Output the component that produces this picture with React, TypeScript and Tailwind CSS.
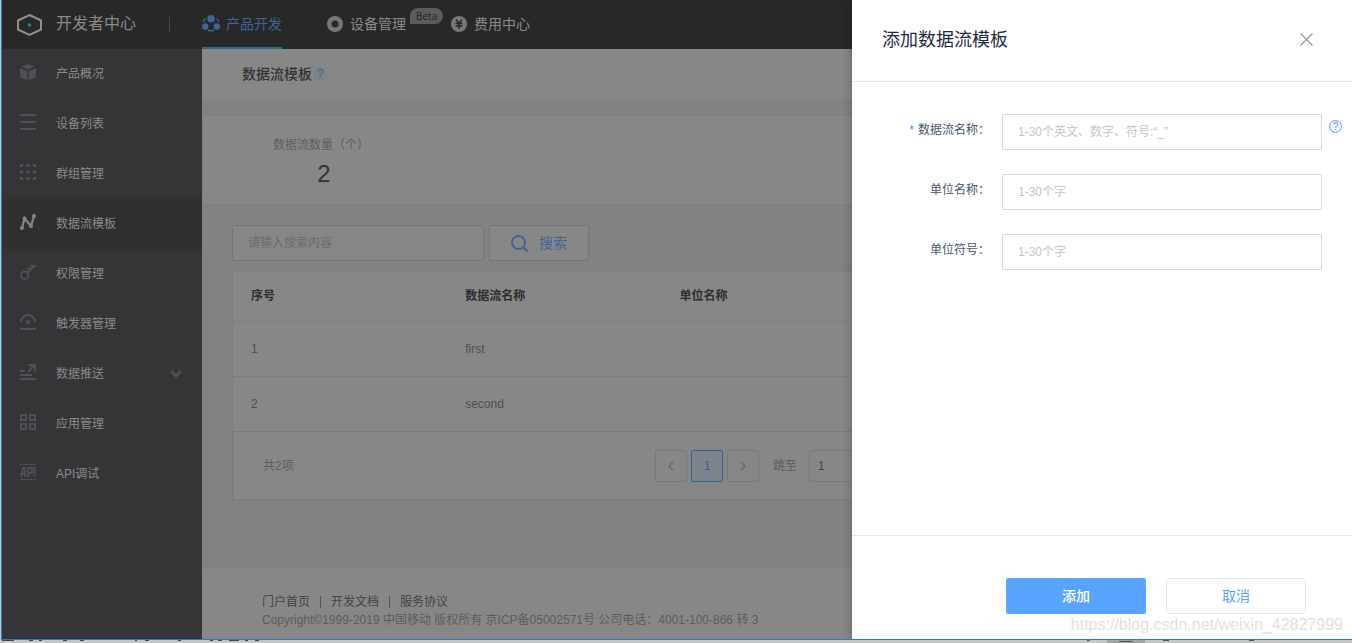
import type { ReactNode } from "react";

type MenuItem = {
  label: string;
  icon: ReactNode;
  active?: boolean;
  expandable?: boolean;
};

const menu: MenuItem[] = [
  {
    label: "产品概况",
    icon: (
      <g fill="currentColor">
        <path d="M8 0l6.600 2.700L8 5.400 1.400 2.700z" />
        <path d="M0 4.200l7.300 2.600V16L1.500 14Q0 13.500 0 12z" />
        <path d="M16 4.200L8.700 6.800V16l5.800-2Q16 13.500 16 12z" />
      </g>
    ),
  },
  {
    label: "设备列表",
    icon: <path d="M0 1h16M0 8h16M0 15h16" stroke="currentColor" strokeWidth="2" />,
  },
  {
    label: "群组管理",
    icon: (
      <path
        d="M0 1.500h16M0 8h16M0 14.500h16"
        stroke="currentColor"
        strokeWidth="3"
        strokeDasharray="3 3.500"
      />
    ),
  },
  {
    label: "数据流模板",
    active: true,
    icon: (
      <g fill="currentColor">
        <path d="M2 14L4.500 4.500L11 12L14 2" fill="none" stroke="currentColor" strokeWidth="2.200" />
        <circle cx="2" cy="14" r="2" />
        <circle cx="4.500" cy="4.500" r="2" />
        <circle cx="11" cy="12" r="2" />
        <circle cx="14" cy="2" r="2" />
      </g>
    ),
  },
  {
    label: "权限管理",
    icon: (
      <g fill="none" stroke="currentColor" strokeWidth="1.800">
        <circle cx="4.700" cy="11.300" r="3.700" />
        <path d="M7.200 8.800L14 2h2M7.500 3.500L10 6M10.700 0.800L13 3" />
      </g>
    ),
  },
  {
    label: "触发器管理",
    icon: (
      <g fill="none" stroke="currentColor" strokeWidth="2">
        <path d="M1 8a7 7 0 0 1 14 0M0 15h16" />
        <circle cx="8" cy="8" r="2" fill="currentColor" stroke="none" />
      </g>
    ),
  },
  {
    label: "数据推送",
    expandable: true,
    icon: (
      <path
        d="M0 7h5M0 11h12M0 15h16M8 8l6.500-7M8 1h7v7"
        fill="none"
        stroke="currentColor"
        strokeWidth="2"
      />
    ),
  },
  {
    label: "应用管理",
    icon: (
      <path
        d="M1 1h5v5H1zM10 1h5v5h-5zM1 10h5v5H1zM10 10h5v5h-5z"
        fill="none"
        stroke="currentColor"
        strokeWidth="2"
      />
    ),
  },
  {
    label: "API调试",
    icon: (
      <g fill="none" stroke="currentColor">
        <path d="M0 0.500h2M3 0.500h13M0 15.500h13M14 15.500h2" />
        <path d="M1 13L3 4h2v9M2 10h3M8 13V4h4v5H8M14.500 3v10" strokeWidth="1.800" />
      </g>
    ),
  },
];

const rows = [
  { id: 1, name: "first", unit: "" },
  { id: 2, name: "second", unit: "" },
];

const fields = [
  { id: "stream-name", label: "数据流名称：", placeholder: "1-30个英文、数字、符号:“_”", required: true },
  { id: "unit-name", label: "单位名称：", placeholder: "1-30个字", required: false },
  { id: "unit-symbol", label: "单位符号：", placeholder: "1-30个字", required: false },
];

const footerLinks = ["门户首页", "开发文档", "服务协议"];

function TopBar() {
  return (
    <header className="flex h-[49px] items-center bg-[#282828] pl-[15px] text-[#8a8a8a]">
      <svg width="25" height="24" viewBox="0 0 25 24" fill="none" className="mr-3.5">
        <path d="M12.500 2L24 7.500v9L12.500 22 1 16.500v-9z" stroke="#8f8f8f" strokeWidth="2" />
        <circle cx="12.500" cy="12" r="1.800" fill="#2b7f9c" />
      </svg>
      <span className="pb-0.5 text-base">开发者中心</span>
      <span className="ml-[33px] h-4 w-px bg-[#4a4a4a]" />
      <nav className="ml-8 flex h-full gap-[45px] text-sm">
        <a
          href="#product"
          className="flex items-center gap-1.5 border-b-2 border-[#2a6a86] text-[#3f6496]"
        >
          <svg width="18" height="17" viewBox="0 0 18 17" fill="currentColor">
            <circle cx="9" cy="3.800" r="3.800" />
            <circle cx="3.200" cy="11.500" r="3.200" />
            <circle cx="14.800" cy="11.500" r="3.200" />
            <path
              d="M3.500 3.500Q1.500 5 1.500 7M14.500 3.500Q16.500 5 16.500 7M6 15q3 1.500 6 0"
              fill="none"
              stroke="currentColor"
              strokeWidth="1.500"
            />
          </svg>
          产品开发
        </a>
        <a href="#device" className="relative flex items-center gap-[7px] pb-0.5">
          <svg width="16" height="16" viewBox="0 0 16 16" fill="none">
            <circle cx="8" cy="8" r="5.800" stroke="#777777" strokeWidth="4.400" />
          </svg>
          设备管理
          <span className="absolute top-2 left-full ml-1 h-4 rounded-full rounded-bl-none bg-[#5c5c5c] px-1.5 font-['Open_Sans'] text-[10px] leading-4 text-[#222222]">
            Beta
          </span>
        </a>
        <a href="#billing" className="flex items-center gap-[7px] pb-0.5">
          <svg width="16" height="16" viewBox="0 0 16 16" fill="none">
            <circle cx="8" cy="8" r="8" fill="#777777" />
            <path
              d="M5 3.500l3 4 3-4M4.500 7.500h7M4.500 10h7M8 7.500V13"
              stroke="#282828"
              strokeWidth="1.500"
            />
          </svg>
          费用中心
        </a>
      </nav>
    </header>
  );
}

function SideMenu() {
  return (
    <nav className="w-[200px] shrink-0 bg-[#353537] text-xs text-[#8a8a8a]">
      {menu.map((item) => (
        <a
          key={item.label}
          href="#menu"
          className={
            item.active
              ? "flex h-[50px] items-center bg-[#2f2f2f] pl-[18px]"
              : "flex h-[50px] items-center pl-[18px]"
          }
        >
          <svg
            width="16"
            height="16"
            viewBox="0 0 16 16"
            className={item.active ? "mb-1 text-[#858585]" : "mb-1 text-[#4f5056]"}
          >
            {item.icon}
          </svg>
          <span className="ml-5">{item.label}</span>
          {item.expandable && (
            <svg width="12" height="8" viewBox="0 0 12 8" fill="none" className="mr-5 ml-auto">
              <path d="M1 1l5 5 5-5" stroke="#505156" strokeWidth="2.500" />
            </svg>
          )}
        </a>
      ))}
    </nav>
  );
}

function Pager() {
  return (
    <div className="flex h-[69px] items-center justify-between border border-[#7a7a7a] pl-[30px] text-xs text-[#5c5c5c]">
      <span>共2项</span>
      <div className="flex w-[649px] items-center gap-1">
        <button
          aria-label="上一页"
          className="flex size-8 items-center justify-center rounded-xs border border-[#7a7a7a]"
        >
          <svg width="6" height="10" viewBox="0 0 6 10" fill="none" stroke="#6b6b6b" strokeWidth="1.500">
            <path d="M5 1L1 5l4 4" />
          </svg>
        </button>
        <button className="size-8 rounded-xs border border-[#3a6090] bg-[#7e838c] text-[#3f5a91]">
          1
        </button>
        <button
          aria-label="下一页"
          className="flex size-8 items-center justify-center rounded-xs border border-[#7a7a7a]"
        >
          <svg width="6" height="10" viewBox="0 0 6 10" fill="none" stroke="#6b6b6b" strokeWidth="1.500">
            <path d="M1 1l4 4-4 4" />
          </svg>
        </button>
        <label htmlFor="jump" className="mr-2 ml-2.5">
          跳至
        </label>
        <input
          id="jump"
          defaultValue="1"
          className="h-8 w-16 rounded-xs border border-[#7a7a7a] px-2 text-[#444444]"
        />
      </div>
    </div>
  );
}

function Content() {
  return (
    <main className="flex min-w-0 flex-1 flex-col bg-[#828282] text-xs text-[#4f4f4f]">
      <div className="flex h-[50px] shrink-0 items-center bg-[#878787] pl-10">
        <h1 className="text-sm font-medium text-[#333333]">数据流模板</h1>
        <span className="ml-px flex size-3.5 items-center justify-center rounded-full bg-[#7b838e] text-xs leading-none text-[#41638f]">
          ?
        </span>
      </div>

      <section className="mt-4 flex h-[90px] shrink-0 border border-[#7f7f7f] bg-[#878787] pt-5 pl-[70px]">
        <div className="text-center">
          <p className="leading-[18px] text-[#5f5f5f]">数据流数量（个）</p>
          <p className="mt-1 pl-1.5 text-2xl text-[#333333]">2</p>
        </div>
      </section>

      <div className="mt-5 flex gap-[5px] pl-[30px]">
        <input
          aria-label="搜索内容"
          placeholder="请输入搜索内容"
          className="h-9 w-[252px] rounded-xs border border-[#757575] bg-[#868686] px-[15px] placeholder:text-[#6c6c6c]"
        />
        <button className="flex h-9 w-[100px] items-center justify-center gap-[11px] rounded-xs border border-[#757575] bg-[#878787] text-sm text-[#3f6496]">
          <svg width="17" height="17" viewBox="0 0 17 17" fill="none" stroke="currentColor" strokeWidth="2">
            <circle cx="7.500" cy="7.500" r="6.500" />
            <path d="M12 12l4.500 4.500" />
          </svg>
          搜索
        </button>
      </div>

      <section className="mt-2.5 mr-[47px] ml-[30px] bg-[#878787]">
        <div className="border-x border-t border-[#7f7f7f]">
          <table className="w-full table-fixed text-left">
            <thead>
              <tr className="h-[49px] font-bold text-[#2d2d2d]">
                <th className="w-1/5 pl-[18px]">序号</th>
                <th className="w-1/5 pl-[18px]">数据流名称</th>
                <th className="pl-[18px]">单位名称</th>
              </tr>
            </thead>
            <tbody>
              {rows.map((row) => (
                <tr key={row.id} className="h-[55px] border-t border-[#7e7e7e]">
                  <td className="pl-[18px]">{row.id}</td>
                  <td className="pl-[18px]">{row.name}</td>
                  <td className="pl-[18px]">{row.unit}</td>
                </tr>
              ))}
            </tbody>
          </table>
        </div>
        <Pager />
      </section>

      <footer className="mt-auto h-[70px] shrink-0 bg-[#878787] pt-6 pl-[60px] text-[#444444]">
        <div className="flex h-[18px] items-center divide-x divide-[#555555]">
          {footerLinks.map((link) => (
            <a key={link} href="#footer" className="px-2.5 leading-3 first:pl-0">
              {link}
            </a>
          ))}
        </div>
        <p className="leading-[18px] text-[#5c5c5c]">
          Copyright©1999-2019 中国移动 版权所有 京ICP备05002571号 公司电话：4001-100-866 转 3
        </p>
      </footer>
    </main>
  );
}

function Drawer() {
  return (
    <aside
      role="dialog"
      aria-label="添加数据流模板"
      className="absolute inset-y-0 right-0 flex w-[500px] flex-col bg-white shadow-[-2px_0_8px_rgba(0,0,0,0.2)]"
    >
      <div className="flex h-[82px] items-center justify-between border-b border-[#e6e6e6] pr-[39px] pb-0.5 pl-[30px]">
        <h2 className="text-lg text-[#1f2d3d]">添加数据流模板</h2>
        <button aria-label="关闭">
          <svg width="13" height="13" viewBox="0 0 13 13" stroke="#999999" strokeWidth="1.200">
            <path d="M0.500 0.500l12 12M12.500 0.500l-12 12" />
          </svg>
        </button>
      </div>

      <form className="flex flex-1 flex-col gap-6 pt-8 text-xs">
        {fields.map((field) => (
          <div key={field.id} className="flex items-start">
            <label htmlFor={field.id} className="w-[138px] text-right leading-8 text-[#48576a]">
              {field.required && <span className="mr-1 text-[#20a0ff]">*</span>}
              {field.label}
            </label>
            <input
              id={field.id}
              placeholder={field.placeholder}
              className="ml-3 h-9 w-80 rounded-xs border border-[#d6d7da] px-[15px] placeholder:text-[#c3c6cc]"
            />
            {field.required && (
              <button
                type="button"
                aria-label="帮助"
                className="mt-1.5 ml-[7px] flex size-[13px] items-center justify-center rounded-full border border-[#58a3ff] bg-[#f0f7ff] text-[10px] leading-none text-[#58a3ff]"
              >
                ?
              </button>
            )}
          </div>
        ))}
      </form>

      <div className="flex h-[104px] items-end justify-end gap-5 border-t border-[#e6e6e6] pr-[46px] pb-[25px] text-sm">
        <button className="h-9 w-[140px] rounded-xs bg-[#58a3ff] font-medium text-white">添加</button>
        <button className="h-9 w-[140px] rounded-xs border border-[#e6e8eb] text-[#58a3ff]">取消</button>
      </div>
    </aside>
  );
}

export default function App() {
  return (
    <div
      lang="zh-CN"
      className="flex min-h-screen flex-col bg-[#c6c6c6] pl-px font-['Liberation_Sans','Noto_Sans_CJK_SC',sans-serif]"
    >
      <div className="relative flex flex-1 flex-col overflow-hidden border-b border-l border-[#2b7dbb]">
        <TopBar />
        <div className="flex flex-1">
          <SideMenu />
          <Content />
        </div>
        <Drawer />
        <p className="absolute right-[9px] bottom-0.5 text-base text-[#e2e2e2]">
          https://blog.csdn.net/weixin_42827999
        </p>
      </div>
      {/* edge of the window behind */}
      <div className="flex h-[3px] justify-between overflow-hidden">
        <svg width="280" height="3" fill="none" stroke="#444444">
          <path d="M1 0.500h12M28 0.500h4M38 0.500h3M62 0.500h4M79 0.500h4M134 0.500h2M144 0.500h4M177 0.500h3M209 0.500h3M217 0.500h4M228 0.500h10M244 0.500h3M254 0.500h4" />
        </svg>
        <svg width="265" height="3" fill="none" stroke="#555555">
          <path d="M20 0h38v3H20z" fill="#a5a5a5" stroke="none" />
          <path d="M0 0.500h3M32 1.500h14M76 0.500h6M162 0.500h5" />
        </svg>
      </div>
    </div>
  );
}
